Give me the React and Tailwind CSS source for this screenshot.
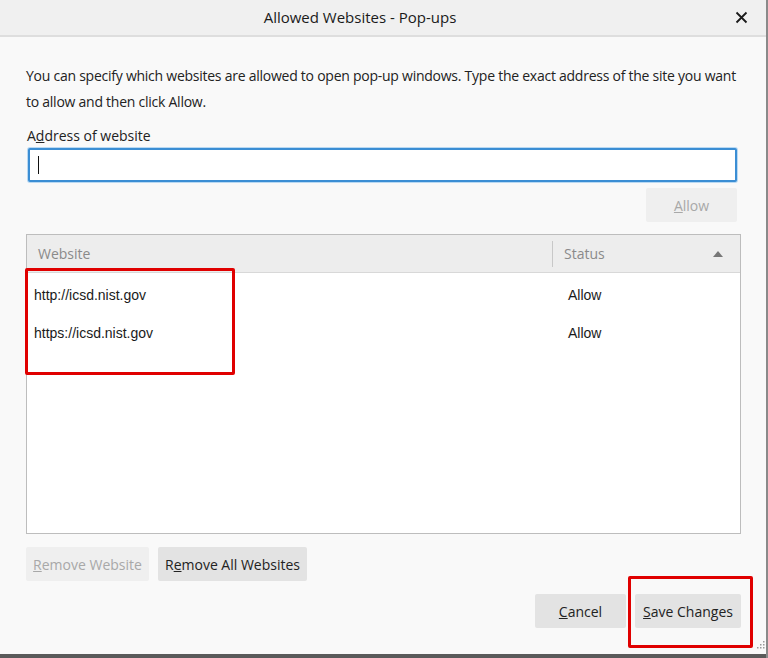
import React from 'react';

const font = { fontFamily: '"Open Sans", "Noto Sans", sans-serif' };

const Btn = ({ children, className = '', disabled }) => (
  <button
    className={`h-[34px] rounded-[2px] text-[14px] ${
      disabled ? 'bg-[#efefef] text-[#a8a8a8]' : 'bg-[#e3e3e3] text-[#222]'
    } ${className}`}
  >
    {children}
  </button>
);

export default function App() {
  const rows = [
    { site: 'http://icsd.nist.gov', status: 'Allow' },
    { site: 'https://icsd.nist.gov', status: 'Allow' },
  ];

  return (
    <div className="w-[768px] h-[658px] flex flex-col bg-[#f9f9f9] border-r-2 border-[#8a8a8a] overflow-hidden" style={font}>
      {/* Title bar */}
      <div className="h-[37px] shrink-0 bg-[#f0f0f0] border-b-2 border-[#dedede] flex items-center relative">
        <div className="flex-1 text-center text-[15px] text-[#1a1a1a] pr-[46px]">Allowed Websites - Pop-ups</div>
        <div className="absolute right-[16px] top-[8px] w-[18px] h-[18px] flex items-center justify-center">
          <svg width="13" height="13" viewBox="0 0 13 13">
            <path d="M1.5 1.5 L11.5 11.5 M11.5 1.5 L1.5 11.5" stroke="#1a1a1a" strokeWidth="1.8" />
          </svg>
        </div>
      </div>

      {/* Body */}
      <div className="flex-1 flex flex-col pl-[26px] pr-[25px] pt-[26px] relative">
        <p className="text-[14px] leading-[26px] text-[#222] tracking-[-0.25px]">
          You can specify which websites are allowed to open pop-up windows. Type the exact address of the site you want to allow and then click Allow.
        </p>
        <label className="mt-[11px] text-[14px] leading-[20px] text-[#222] pl-[1px]">
          A<span className="underline">d</span>dress of website
        </label>
        <div className="mt-[2px] ml-[2px] mr-[4px] h-[34px] bg-white border-2 border-[#3b8ed4] rounded-[2px] shadow-[0_0_0_1px_#b9d9f3] flex items-center px-[8px]">
          <div className="w-[1px] h-[18px] bg-[#111]" />
        </div>
        <div className="flex justify-end mt-[6px] mr-[4px]">
          <Btn disabled className="w-[91px]">
            <span className="underline">A</span>llow
          </Btn>
        </div>

        {/* Table */}
        <div className="mt-[12px] h-[300px] border border-[#bdbdbd] bg-white flex flex-col">
          <div className="h-[38px] shrink-0 bg-[#ededed] border-b border-[#d8d8d8] flex items-center text-[14px] text-[#8a8a8a]">
            <div className="flex-1 pl-[11px]">Website</div>
            <div className="w-[1px] h-[26px] bg-[#c8c8c8]" />
            <div className="w-[187px] pl-[11px] flex items-center justify-between pr-[17px]">
              <span>Status</span>
              <svg width="10" height="6" viewBox="0 0 10 6">
                <path d="M0 6 L5 0 L10 6 Z" fill="#777" />
              </svg>
            </div>
          </div>
          <div className="flex flex-col pt-[3px] text-[14px] text-[#1a1a1a]" style={{ fontFamily: '"Liberation Sans", Arial, sans-serif' }}>
            {rows.map((r) => (
              <div key={r.site} className="h-[38px] flex items-center">
                <div className="flex-1 pl-[7px]">{r.site}</div>
                <div className="w-[188px] pl-[16px]">{r.status}</div>
              </div>
            ))}
          </div>
        </div>

        <div className="flex gap-[9px] mt-[13px]">
          <Btn disabled className="w-[123px]">
            <span className="underline">R</span>emove Website
          </Btn>
          <Btn className="w-[149px]">
            R<span className="underline">e</span>move All Websites
          </Btn>
        </div>

        <div className="flex justify-end gap-[9px] mt-[13px]">
          <Btn className="w-[91px]">
            <span className="underline">C</span>ancel
          </Btn>
          <Btn className="w-[106px]">
            <span className="underline">S</span>ave Changes
          </Btn>
        </div>

        {/* annotation boxes */}
        <div className="absolute left-[25px] top-[231px] w-[210px] h-[107px] border-[3px] border-[#e00000] rounded-[2px]" />
        <div className="absolute left-[628px] top-[539px] w-[125px] h-[72px] border-[3px] border-[#e00000] rounded-[2px]" />

        {/* resize grip */}
        <svg className="absolute right-[1px] bottom-[5px]" width="8" height="8" viewBox="0 0 8 8">
          <g fill="#9a9a9a">
            <rect x="6" y="0" width="1.5" height="1.5" />
            <rect x="3" y="3" width="1.5" height="1.5" />
            <rect x="6" y="3" width="1.5" height="1.5" />
            <rect x="0" y="6" width="1.5" height="1.5" />
            <rect x="3" y="6" width="1.5" height="1.5" />
            <rect x="6" y="6" width="1.5" height="1.5" />
          </g>
        </svg>
      </div>
      <div className="h-[4px] shrink-0 bg-[#5a5a5a]" />
    </div>
  );
}
